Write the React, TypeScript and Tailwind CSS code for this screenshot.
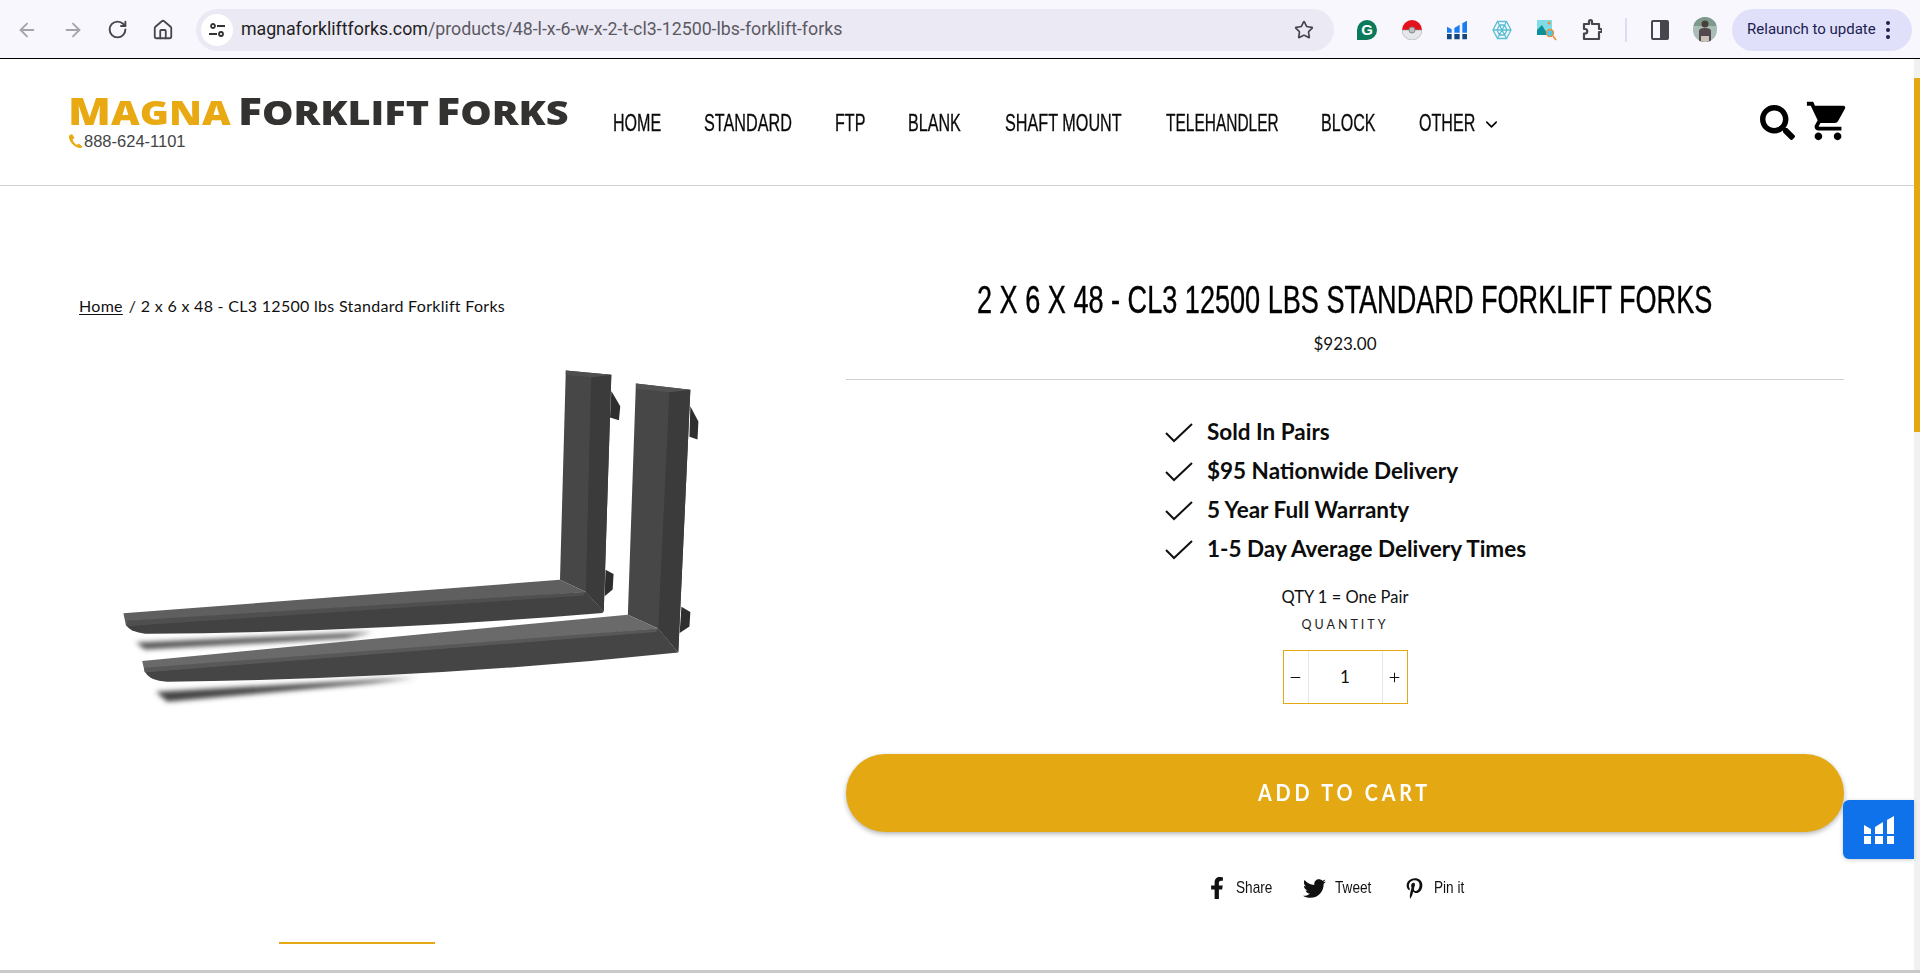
import React from "react";
import { ArrowLeft, ArrowRight, RotateCw, Home, Star, ChevronDown, Minus, Plus } from "lucide-react";
import { FaFacebookF, FaTwitter, FaPinterestP, FaSearch } from "react-icons/fa";
import { MdShoppingCart } from "react-icons/md";

const narrow = "font-['Liberation_Sans',sans-serif]";
const body = "font-['Lato','Noto_Sans',sans-serif]";

function Bars({ className, fill }: { className?: string; fill: string }) {
  return (
    <svg viewBox="0 0 30 28" className={className} fill={fill}>
      <path d="M0 9l7 4v5H0zM11 11l8-5v12h-8zM23 4l7-4v18h-7zM0 20h7v8H0zM11 20h8v8h-8zM23 20h7v8h-7z" />
    </svg>
  );
}

function ChromeBar() {
  return (
    <div className="h-[59px] bg-[#f9f7fe] border-b border-black flex items-center pt-[1px] pl-[16px] pr-[8px] text-[#46464f] shrink-0">
      <div className="flex items-center gap-[23.5px] w-[180px]">
        <ArrowLeft size={22} strokeWidth={2} className="text-[#a4a4aa]" />
        <ArrowRight size={22} strokeWidth={2} className="text-[#a4a4aa]" />
        <RotateCw size={21} strokeWidth={2.2} />
        <Home size={22} strokeWidth={2} />
      </div>
      <div className="w-[1139px] h-[42px] rounded-full bg-[#ebe9f4] flex items-center pl-[5px] pr-[20px]">
        <div className="w-[32px] h-[32px] rounded-full bg-white flex items-center justify-center shrink-0">
          <svg width="18" height="18" viewBox="0 0 18 18" fill="none" stroke="#333" strokeWidth="1.8">
            <circle cx="5" cy="5" r="2" />
            <path d="M9 5h8M1 13h8" />
            <circle cx="13" cy="13" r="2" />
          </svg>
        </div>
        <div className="ml-[8px] flex-1 text-[17.8px] font-['Roboto',sans-serif] whitespace-nowrap text-[#5b5a63]">
          <span className="text-[#1f1f25]">magnaforkliftforks.com</span>/products/48-l-x-6-w-x-2-t-cl3-12500-lbs-forklift-forks
        </div>
        <Star size={20} strokeWidth={2} className="text-[#46464f]" />
      </div>
      <div className="flex items-center ml-[23px] gap-[25px]">
        <div className="relative w-[20px] h-[20px] rounded-full rounded-bl-[3px] bg-[#0b7a5b] flex items-center justify-center">
          <span className="text-white text-[15px] font-bold font-['Liberation_Sans',sans-serif] leading-none">G</span>
        </div>
        <svg width="20" height="20" viewBox="0 0 20 20">
          <path d="M0 10a10 10 0 0 1 20 0z" fill="#e3121c" />
          <path d="M0 10a10 10 0 0 0 20 0z" fill="#e4e8ea" stroke="#999" strokeWidth=".5" />
          <circle cx="10" cy="10" r="3" fill="#b9bfc2" stroke="#888" />
        </svg>
        <svg width="20" height="20" viewBox="0 0 30 28">
          <path d="M0 9l7 4v5H0z M11 11l8-5v12h-8z M23 4l7-4v18h-7z" fill="#1a7cf0" />
          <path d="M0 20h7v8H0z M11 20h8v8h-8z M23 20h7v8h-7z" fill="#14477f" />
        </svg>
        <svg width="20" height="20" viewBox="0 0 20 20" fill="none" stroke="#58bfd2" strokeWidth="1.3">
          <path d="M5.5 1.5h9L19 10l-4.500 8.500h-9L1 10z" />
          <path d="M7.500 5h5L15 10l-2.500 5h-5L5 10zM1 10h18M5.500 1.500l9 17M14.500 1.500l-9 17" />
        </svg>
        <svg width="20" height="22" viewBox="0 0 20 22">
          <rect x="0" y="1" width="15" height="15" fill="#7fdce6" />
          <path d="M0 16V11l5-5 6 10z" fill="#0d8f98" />
          <circle cx="12" cy="4" r="1.500" fill="#f08a34" />
          <circle cx="13" cy="14" r="3.500" fill="#49c9e8" stroke="#f08a34" strokeWidth="1.300" />
          <path d="M16 17l3 4" stroke="#f08a34" strokeWidth="1.500" />
        </svg>
        <svg width="20" height="24" viewBox="0 0 20 24" fill="none" stroke="#46464f" strokeWidth="2.200" strokeLinejoin="round">
          <path d="M2 6h5V3.500a1.500 1.500 0 0 1 3 0V6h7v5h1.500a1.500 1.500 0 0 1 0 3H17v7H2v-5.500h1a2.200 2.200 0 0 0 0-4.500H2z" />
        </svg>
      </div>
      <div className="w-[2px] h-[24px] bg-[#dcdcf2] ml-[23px]" />
      <div className="w-[18px] h-[20px] ml-[24px] rounded-[2px] border-[2.5px] border-[#46464f] flex justify-end">
        <div className="w-[7px] h-full bg-[#46464f]" />
      </div>
      <svg width="24" height="25" viewBox="0 0 24 25" className="ml-[24px] rounded-full">
        <rect width="24" height="25" fill="#a9bdb6" />
        <rect width="24" height="9" fill="#7d9a8c" />
        <circle cx="12" cy="7" r="3.500" fill="#4a3f3b" />
        <path d="M6 25V14q0-3 6-3t6 3v11z" fill="#54484e" />
        <rect x="8" y="19" width="8" height="6" fill="#c9c2b8" />
      </svg>
      <div className="ml-[15px] w-[180px] h-[42px] rounded-full bg-[#e0e0fa] flex items-center pl-[15px] text-[#20204f]">
        <span className="text-[15px] font-['Roboto',sans-serif] whitespace-nowrap">Relaunch to update</span>
        <div className="ml-[10px] flex flex-col gap-[3px]">
          <div className="w-[4px] h-[4px] rounded-full bg-[#20204f]" />
          <div className="w-[4px] h-[4px] rounded-full bg-[#20204f]" />
          <div className="w-[4px] h-[4px] rounded-full bg-[#20204f]" />
        </div>
      </div>
    </div>
  );
}

function Logo() {
  return (
    <div className="w-[544px] h-[50px] shrink-0 pt-[2px] -ml-[1px] mr-[1px]">
      <div className="-mt-[7px] flex items-baseline font-['Open_Sans',sans-serif] font-extrabold leading-none h-[30px] whitespace-nowrap origin-left scale-x-[1.2]">
        <span className="text-[#e8a913] text-[37px]">M</span>
        <span className="text-[#e8a913] text-[33px]">AGNA</span>
        <span className="text-[#343230] text-[37px] ml-[6px]">F</span>
        <span className="text-[#343230] text-[33px]">ORKLIFT</span>
        <span className="text-[#343230] text-[37px] ml-[6px]">F</span>
        <span className="text-[#343230] text-[33px]">ORKS</span>
      </div>
      <div className="flex items-center mt-[11px] text-[16.500px] leading-none text-[#444] font-['Liberation_Sans',sans-serif]">
        <svg width="16" height="16" viewBox="0 0 16 16" fill="#e8a913"><path d="M1 2.500L4 1l2.500 4-2 1.500c.6 2.500 2.500 4.500 4.500 5.500l1.500-1.500 4 3L13 15C7 15.500 0 8 1 2.500z" /></svg>
        <span>888-624-1101</span>
      </div>
    </div>
  );
}

const navItems: [string, string, string][] = [
  ["HOME", "w-[48px]", "scale-x-[0.67]"],
  ["STANDARD", "w-[89px]", "scale-x-[0.675]"],
  ["FTP", "w-[30px]", "scale-x-[0.67]"],
  ["BLANK", "w-[55px]", "scale-x-[0.67]"],
  ["SHAFT MOUNT", "w-[118px]", "scale-x-[0.675]"],
  ["TELEHANDLER", "w-[113px]", "scale-x-[0.645]"],
  ["BLOCK", "w-[55px]", "scale-x-[0.67]"],
  ["OTHER", "w-[54px]", "scale-x-[0.67]"],
];

function Header() {
  return (
    <header className="h-[127px] border-b border-[#d2d2d2] flex items-center pl-[69px] pr-[69px] shrink-0">
      <Logo />
      <nav className={`flex items-center gap-[42.500px] text-[24px] text-[#0a0a0a] leading-none pt-[2px] [-webkit-text-stroke:0.3px_#0a0a0a] ${narrow}`}>
        {navItems.map(([t, w, s]) => (
          <span key={t} className={`${w} whitespace-nowrap inline-block`}>
            <span className={`inline-block origin-left ${s}`}>{t}</span>
          </span>
        ))}
      </nav>
      <ChevronDown size={19} strokeWidth={2} className="ml-[9px] mt-[5px]" />
      <div className="ml-auto flex items-center gap-[10px] text-black">
        <FaSearch size={35} />
        <MdShoppingCart size={46} className="-mt-[2px]" />
      </div>
    </header>
  );
}

function Forks() {
  return (
    <svg viewBox="0 200 1568 1360" className="w-[700px] h-[593px] block" preserveAspectRatio="none">
      <defs>
        <filter id="b" x="-10%" y="-100%" width="120%" height="300%"><feGaussianBlur stdDeviation="6" /></filter>
        <filter id="s" x="-2%" y="-2%" width="104%" height="104%"><feGaussianBlur stdDeviation="1.6" /></filter>
      </defs>
      <path d="M170 832L700 808 L640 822 L190 848z" fill="#555" filter="url(#b)" />
      <path d="M215 945L800 912 L700 925 L240 968z" fill="#444" filter="url(#b)" />
      <g filter="url(#s)">
        {/* back fork */}
        <path d="M1235 255l20 35-3 32-20-6zM1222 665l18 10-2 35-18 16z" fill="#2f2f2f" />
        <path d="M1133 208l102 10-17 542-40-44-58-28z" fill="#464646" />
        <path d="M1190 222l45-4-17 542-40-44z" fill="#3a3a3a" />
        <path d="M1133 208l102 10-45 6-57-6z" fill="#505050" />
        <path d="M148 792L1178 716l40 44-3 4Q700 808 200 812q-40-2-52-20z" fill="#424242" />
        <path d="M142 765L1120 688l58 28-1030 78z" fill="#5e5e5e" />
        <path d="M150 782L1178 716l-6 8-1022 70z" fill="#505050" />
        {/* front fork */}
        <path d="M1412 290l18 35-2 41-18-6zM1392 750l20 12-2 33-22 15z" fill="#2f2f2f" />
        <path d="M1290 238l122 14-27 602-45-54-68-32z" fill="#474747" />
        <path d="M1365 256l47-4-27 602-45-54z" fill="#3b3b3b" />
        <path d="M1290 238l122 14-47 6-75-8z" fill="#535353" />
        <path d="M190 898L1340 800l45 55Q830 915 240 922q-40-2-50-24z" fill="#444" />
        <path d="M184 874L1272 768l68 32-1150 100z" fill="#6a6a6a" />
        <path d="M188 890L1340 800l-6 8-1144 92z" fill="#595959" />
      </g>
    </svg>
  );
}

function Left() {
  return (
    <div className="w-[846px] shrink-0 relative">
      <div className={`pl-[79px] pt-[108px] h-[181px] text-[16px] tracking-[0.3px] text-[#111] whitespace-nowrap ${body}`}>
        <span className="underline underline-offset-2">Home</span>
        <span className="ml-[6px]">/ 2 x 6 x 48 - CL3 12500 lbs Standard Forklift Forks</span>
      </div>
      <div className="pl-[60px]">
        <Forks />
      </div>
      <div className="absolute left-[279px] top-[756px] w-[156px] h-[2px] bg-[#e4a812]" />
    </div>
  );
}

const checks = ["Sold In Pairs", "$95 Nationwide Delivery", "5 Year Full Warranty", "1-5 Day Average Delivery Times"];

function Right() {
  return (
    <div className="w-[998px] shrink-0 flex flex-col items-center pt-[90px]">
      <div className="w-full h-[48px] flex justify-center">
        <h1 className={`shrink-0 origin-center scale-x-[0.713] text-[38px] leading-[48px] font-normal text-black whitespace-nowrap [-webkit-text-stroke:0.4px_#000] ${narrow}`}>
          2 X 6 X 48 - CL3 12500 LBS STANDARD FORKLIFT FORKS
        </h1>
      </div>
      <div className={`mt-[8px] text-[17px] leading-[24px] text-[#111] ${body}`}>$923.00</div>
      <div className="mt-[23px] w-full h-px bg-[#cfcfcf]" />
      <div className={`mt-[37px] self-start ml-[319px] flex flex-col gap-[9px] text-[22.500px] leading-[30px] font-bold text-[#0c0c0c] ${body}`}>
        {checks.map((c) => (
          <div key={c} className="flex items-center whitespace-nowrap h-[30px]">
            <svg width="28" height="20" viewBox="0 0 28 20" fill="none" stroke="#111" strokeWidth="2" className="mr-[14px] mt-[2px]">
              <path d="M1 10l8 8L27 1" />
            </svg>
            <span>{c}</span>
          </div>
        ))}
      </div>
      <div className={`mt-[21px] text-[16.500px] leading-[24px] text-[#111] ${body}`}>QTY 1 = One Pair</div>
      <div className={`mt-[6px] text-[12.500px] leading-[20px] tracking-[3px] text-[#222] ${body}`}>QUANTITY</div>
      <div className={`mt-[15px] w-[125px] h-[54px] border border-[#e4a812] flex items-center text-[#111] ${body}`}>
        <div className="w-[25px] h-full flex items-center justify-center border-r border-[#e6e6e6]"><Minus size={15} strokeWidth={1.600} /></div>
        <div className="flex-1 text-center text-[17px]">1</div>
        <div className="w-[25px] h-full flex items-center justify-center border-l border-[#e6e6e6]"><Plus size={15} strokeWidth={1.600} /></div>
      </div>
      <button className={`mt-[50px] w-full h-[78px] pb-[2px] rounded-full bg-[#e4a812] text-white text-[23px] font-bold tracking-[4.400px] shadow-[0_2px_5px_rgba(0,0,0,0.3)] ${body}`}>
        <span className="inline-block scale-x-[0.86]">ADD TO CART</span>
      </button>
      <div className={`mt-[44px] mr-[16px] flex items-center text-[17px] leading-[24px] text-[#111] whitespace-nowrap ${narrow}`}>
        <FaFacebookF size={22} />
        <span className="ml-[8px] w-[37px] inline-block"><span className="inline-block origin-left scale-x-[0.8]">Share</span></span>
        <FaTwitter size={23} className="ml-[30px]" />
        <span className="ml-[9px] w-[38px] inline-block"><span className="inline-block origin-left scale-x-[0.8]">Tweet</span></span>
        <FaPinterestP size={21} className="ml-[31px]" />
        <span className="ml-[9px] w-[34px] inline-block"><span className="inline-block origin-left scale-x-[0.8]">Pin it</span></span>
      </div>
    </div>
  );
}

export default function App() {
  return (
    <div className="relative h-[973px] w-[1920px] overflow-hidden bg-white flex flex-col">
      <ChromeBar />
      <Header />
      <main className="flex-1 flex">
        <Left />
        <Right />
      </main>
      <div className="h-[3px] bg-[#c9c9c9] shrink-0" />
      <div className="absolute right-0 top-[59px] bottom-[3px] w-[6px] bg-[#f1f1f1]">
        <div className="mt-[19px] h-[354px] bg-[#e4a812]" />
      </div>
      <div className="absolute left-[1843px] top-[800px] w-[71px] h-[59px] rounded-l-[6px] bg-[#0f72ea] flex items-center justify-center shadow-[0_1px_4px_rgba(0,0,0,0.2)]">
        <Bars className="w-[30px] h-[28px]" fill="#ffffff" />
      </div>
    </div>
  );
}
